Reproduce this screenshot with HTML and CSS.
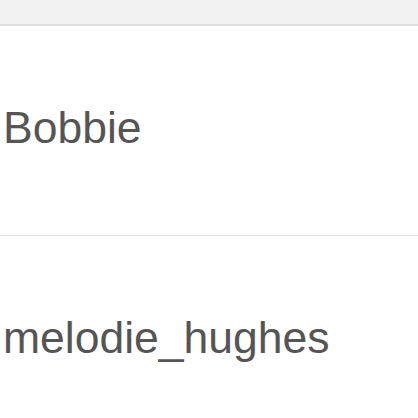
FILE: index.html
```html
<!DOCTYPE html>
<html lang="en">
<head>
    <meta charset="UTF-8">
    <title>Users</title>
    <link rel="stylesheet" href="styles.css">
</head>
<body>

<div class="top-bar"></div>

<ul class="user-list">
    <li class="user-row">Bobbie</li>
    <li class="user-row">melodie_hughes</li>
</ul>

</body>
</html>
```

FILE: styles.css
```css
body {
    margin: 0;
    font-family: "Liberation Sans", Arial, sans-serif;
    background: white;
    overflow: hidden;
}

.top-bar {
    height: 24px;
    background: #f2f2f2;
    border-bottom: 2px solid #dedede;
}

.user-list {
    list-style: none;
    margin: 0;
    padding: 0;
}

.user-row {
    height: 209px;
    box-sizing: border-box;
    height: 210px;
    display: flex;
    align-items: center;
    padding: 0 0 6px 3px;
    font-size: 44.5px;
    color: #555;
    border-bottom: 1px solid #e0e0e0;
}
```
